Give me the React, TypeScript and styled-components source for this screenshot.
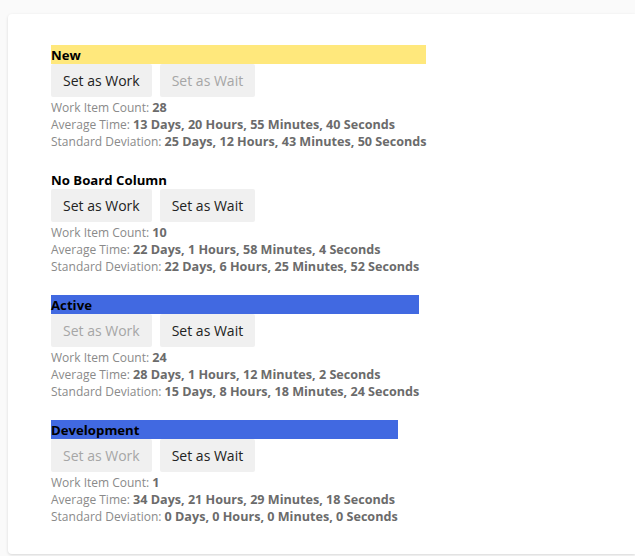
import React from "react";
import styled, { createGlobalStyle } from "styled-components";

const Global = createGlobalStyle`
  html, body { margin: 0; padding: 0; background: #fafafa; }
  body { font-family: "Segoe UI", "Open Sans", "Noto Sans", sans-serif; }
`;

const Page = styled.div`
  padding: 14px 0 3px 8px;
`;

const Card = styled.div`
  background: #ffffff;
  border-radius: 4px 0 0 4px;
  box-shadow: 0 1px 3px rgba(0, 0, 0, 0.14);
  padding: 31px 0 29px 43px;
  display: flex;
  flex-direction: column;
  align-items: flex-start;
  gap: 20px;
  min-height: 539px;
  box-sizing: border-box;
`;

const Section = styled.div`
  display: inline-flex;
  flex-direction: column;
`;

const Header = styled.div<{ $bg?: string }>`
  background: ${(p) => p.$bg ?? "transparent"};
  color: #000;
  font-weight: 700;
  font-size: 13.2px;
  line-height: 18px;
  height: 19px;
  padding-top: 1px;
  box-sizing: border-box;
`;

const ButtonRow = styled.div`
  display: flex;
  gap: 8px;
`;

const Button = styled.button<{ $disabled?: boolean }>`
  font-family: inherit;
  font-size: 14px;
  height: 33px;
  padding: 0 12px;
  border: none;
  border-radius: 2px;
  background: #f0f0f0;
  color: ${(p) => (p.$disabled ? "#a6a6a6" : "#222")};
  cursor: ${(p) => (p.$disabled ? "default" : "pointer")};
`;

const Stats = styled.div`
  font-size: 12px;
  line-height: 17px;
  color: #8a8a8a;
  padding-top: 2px;
`;

const Value = styled.span`
  font-weight: 700;
  font-size: 12.6px;
  line-height: 16px;
  color: #6b6b6b;
`;

type Col = {
  name: string;
  bg?: string;
  work: boolean;
  wait: boolean;
  count: number;
  avg: string;
  sd: string;
};

const cols: Col[] = [
  { name: "New", bg: "#ffe87c", work: true, wait: false, count: 28, avg: "13 Days, 20 Hours, 55 Minutes, 40 Seconds", sd: "25 Days, 12 Hours, 43 Minutes, 50 Seconds" },
  { name: "No Board Column", work: true, wait: true, count: 10, avg: "22 Days, 1 Hours, 58 Minutes, 4 Seconds", sd: "22 Days, 6 Hours, 25 Minutes, 52 Seconds" },
  { name: "Active", bg: "#4169e1", work: false, wait: true, count: 24, avg: "28 Days, 1 Hours, 12 Minutes, 2 Seconds", sd: "15 Days, 8 Hours, 18 Minutes, 24 Seconds" },
  { name: "Development", bg: "#4169e1", work: false, wait: true, count: 1, avg: "34 Days, 21 Hours, 29 Minutes, 18 Seconds", sd: "0 Days, 0 Hours, 0 Minutes, 0 Seconds" },
];

export default function App() {
  return (
    <>
      <Global />
      <Page>
        <Card>
          {cols.map((c) => (
            <Section key={c.name}>
              <Header $bg={c.bg}>{c.name}</Header>
              <ButtonRow>
                <Button $disabled={!c.work}>Set as Work</Button>
                <Button $disabled={!c.wait}>Set as Wait</Button>
              </ButtonRow>
              <Stats>
                <div>Work Item Count: <Value>{c.count}</Value></div>
                <div>Average Time: <Value>{c.avg}</Value></div>
                <div>Standard Deviation: <Value>{c.sd}</Value></div>
              </Stats>
            </Section>
          ))}
        </Card>
      </Page>
    </>
  );
}
